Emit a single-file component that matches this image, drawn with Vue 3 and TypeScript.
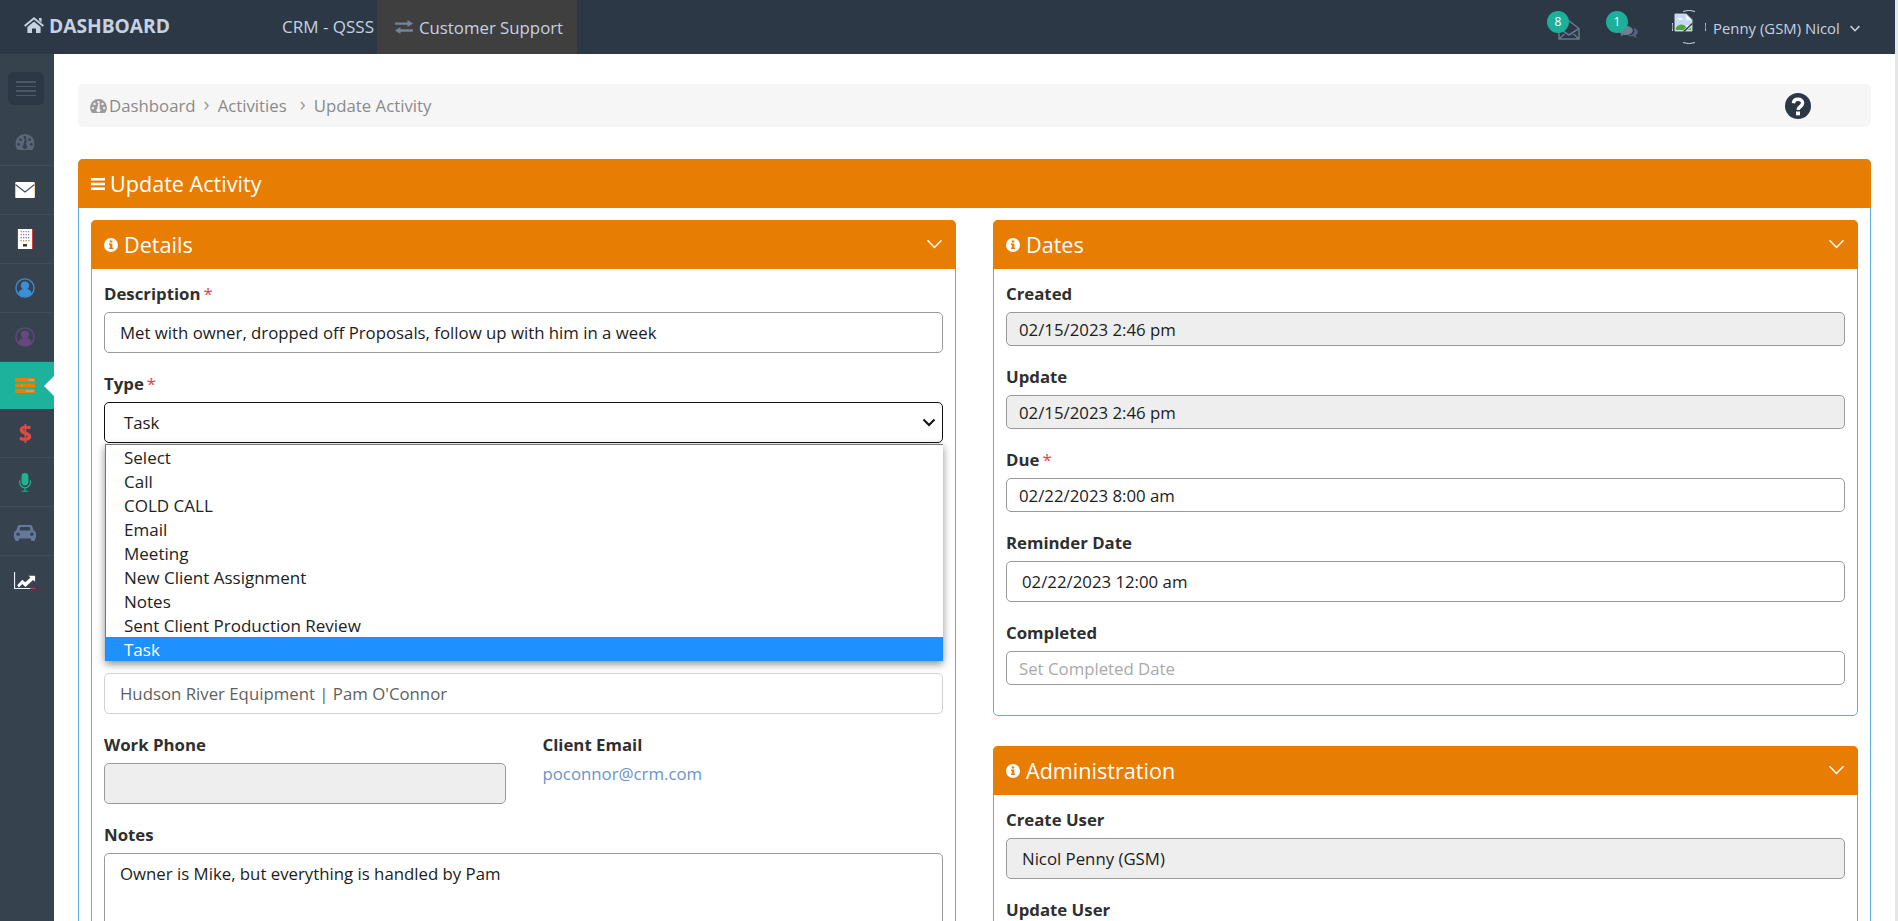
<script setup lang="ts">
interface NavItem {
  icon: string
  active?: boolean
  dollar?: boolean
}

const navItems: NavItem[] = [
  { icon: 'gauge' },
  { icon: 'mail' },
  { icon: 'building' },
  { icon: 'user-blue' },
  { icon: 'user-purple' },
  { icon: 'tasks', active: true },
  { icon: 'dollar', dollar: true },
  { icon: 'mic' },
  { icon: 'car' },
  { icon: 'chart' },
]

const typeOptions: string[] = [
  'Select',
  'Call',
  'COLD CALL',
  'Email',
  'Meeting',
  'New Client Assignment',
  'Notes',
  'Sent Client Production Review',
  'Task',
]
</script>

<template>
  <div class="shell">
    <svg class="defs" width="0" height="0" aria-hidden="true">
      <symbol id="i-gauge" viewBox="0 0 24 20">
        <path fill="currentColor" d="M12 0A12 12 0 0 0 0 12c0 2.900 1 5.600 2.600 7.600.2.300.5.400.9.400h17c.4 0 .7-.1.900-.4C23 17.600 24 14.900 24 12A12 12 0 0 0 12 0z" />
        <g fill="var(--hole)">
          <circle cx="4" cy="13" r="1.700" />
          <circle cx="6.300" cy="7" r="1.700" />
          <circle cx="12" cy="4.300" r="1.700" />
          <circle cx="17.700" cy="7" r="1.700" />
          <circle cx="20" cy="13" r="1.700" />
          <path d="M13.800 6 13.400 13.600a2.800 2.800 0 1 1-3.300.2L11.800 6z" />
        </g>
      </symbol>
      <symbol id="i-info" viewBox="0 0 16 16">
        <path fill-rule="evenodd" fill="currentColor" d="M8 0a8 8 0 1 1 0 16A8 8 0 0 1 8 0zM6.500 2.800v2.400h3V2.800zM5.700 6.400v1.500h1v3.300h-1v1.500h4.800v-1.500h-1V6.400z" />
      </symbol>
      <symbol id="i-chevron" viewBox="0 0 16 10">
        <path fill="none" stroke="currentColor" stroke-width="1.500" d="M1 1.200 8 8.500l7-7.300" />
      </symbol>
    </svg>

    <div class="page">
      <header class="topbar">
        <div class="brand">
          <svg class="home" viewBox="0 0 20 16">
            <path fill="currentColor" d="M10 0 20 8.300 18.700 9.800 10 2.600 1.300 9.800 0 8.300 10 0zM15 1h2.600v4.400L15 3.200zM3.400 10 10 4.500l6.600 5.500v6H12v-4.500H8V16H3.400z" />
          </svg>
          <span>DASHBOARD</span>
        </div>
        <span class="crm">CRM - QSSS</span>
        <div class="tab">
          <svg class="exchange" viewBox="0 0 18 14">
            <path fill="currentColor" d="M0 2.500h12.500V0L18 3.500 12.500 7V4.800H0zM18 9.200H5.500V7L0 10.500 5.500 14v-2.300H18z" />
          </svg>
          <span>Customer Support</span>
        </div>
        <div class="top-right">
          <div class="notice mail-notice">
            <svg class="env-open" viewBox="0 0 22 20">
              <path fill="none" stroke="currentColor" stroke-width="1.500" d="M1 8.500 11 1l10 7.500V19H1zM1 8.500 11 15l10-6.500M1 19l7-6.500M21 19l-7-6.500" />
            </svg>
            <span class="badge">8</span>
          </div>
          <div class="notice chat-notice">
            <svg class="comments" viewBox="0 0 22 16">
              <path fill="#717e92" d="M8 1c4.400 0 8 2.400 8 5.300s-3.600 5.300-8 5.300c-.9 0-1.800-.1-2.600-.3C4 12.400 2.600 13 1 13.200c1-.8 1.700-1.900 1.900-3C1 9.200 0 7.800 0 6.300 0 3.400 3.600 1 8 1z" />
              <path fill="#54647c" d="M17.200 3.500c2.700.7 4.600 2.500 4.600 4.500 0 1.500-1 2.800-2.600 3.700.2 1.100 1 2.400 1.600 3.300-1.600-.3-3-1.200-4-2.200-.7.1-1.400.2-2.200.2-1.700 0-3.300-.4-4.500-1 5 .4 9.800-2.700 6.800-8.500z" />
            </svg>
            <span class="badge">1</span>
          </div>
          <div class="avatar">
            <svg class="ring" viewBox="0 0 34 34">
              <g fill="none" stroke="#c8d0da" stroke-width="1">
                <path d="M11 1.500a16 16 0 0 1 12 0" />
                <path d="M11 32.500a16 16 0 0 0 12 0" />
                <path d="M.5 13a17 17 0 0 0 0 8" />
                <path d="M33.500 13a17 17 0 0 1 0 8" />
              </g>
            </svg>
            <svg class="broken" viewBox="0 0 20 20">
              <path fill="#f2f5f8" stroke="#a9bacb" stroke-width="1" d="M1 1h12l6 6v12H1z" />
              <path fill="#c3d9f3" d="M2 2h10.500v5.500H18v5L2 14z" />
              <path fill="#4fa53a" d="M2 18v-3c4-4 8-4 11 0l-3 3z" />
              <path fill="#5fb548" d="M14 18l4-3v3z" />
              <path fill="#2c3846" d="M9 19.500 19.500 10v1.800L11.500 19.500z" />
              <path fill="#fff" d="M3.500 6.500c1-1.500 2.500-1.800 3.500-1 1.300-.3 2.200.5 2.300 1.500z" />
            </svg>
          </div>
          <span class="username">Penny (GSM) Nicol</span>
          <svg class="user-caret" viewBox="0 0 16 10">
            <path fill="none" stroke="currentColor" stroke-width="2.400" d="M1 1.200 8 8.500l7-7.300" />
          </svg>
        </div>
      </header>

      <div class="below">
        <nav class="sidebar">
          <div class="toggle">
            <span></span><span></span><span></span><span></span>
          </div>
          <div
            v-for="item in navItems"
            :key="item.icon"
            class="nav-item"
            :class="{ active: item.active }"
          >
            <span v-if="item.dollar" class="dollar">$</span>
            <svg v-else-if="item.icon === 'gauge'" class="ic gauge" viewBox="0 0 24 20"><use href="#i-gauge" /></svg>
            <svg v-else-if="item.icon === 'mail'" class="ic mail" viewBox="0 0 22 16" preserveAspectRatio="none">
              <rect width="22" height="16" rx="1.500" fill="#fff" />
              <path d="M.5 2.500 11 10l10.500-7.500" fill="none" stroke="#3a4a5e" stroke-width="1.200" />
              <path d="M.3 1.500V15" stroke="#4d94d8" stroke-width=".6" />
              <path d="M21.700 1.500V15" stroke="#e8b25a" stroke-width=".6" />
            </svg>
            <svg v-else-if="item.icon === 'building'" class="ic building" viewBox="0 0 16 20">
              <rect width="16" height="20" fill="#fff" />
              <rect width="1" height="20" fill="#2f55c9" />
              <rect x="15" width="1" height="20" fill="#d93a3a" />
              <g fill="#8a80c0">
                <rect x="3.500" y="2" width="1.300" height="1.300" /><rect x="6" y="2" width="1.300" height="1.300" /><rect x="8.500" y="2" width="1.300" height="1.300" /><rect x="11" y="2" width="1.300" height="1.300" />
              </g>
              <g fill="#d0709a">
                <rect x="3.500" y="5" width="1.300" height="1.300" /><rect x="6" y="5" width="1.300" height="1.300" /><rect x="8.500" y="5" width="1.300" height="1.300" /><rect x="11" y="5" width="1.300" height="1.300" />
              </g>
              <g fill="#4f7fd0">
                <rect x="3.500" y="8" width="1.300" height="1.300" /><rect x="6" y="8" width="1.300" height="1.300" /><rect x="8.500" y="8" width="1.300" height="1.300" /><rect x="11" y="8" width="1.300" height="1.300" />
              </g>
              <g fill="#c08f4a">
                <rect x="3.500" y="11" width="1.300" height="1.300" /><rect x="6" y="11" width="1.300" height="1.300" /><rect x="8.500" y="11" width="1.300" height="1.300" /><rect x="11" y="11" width="1.300" height="1.300" />
              </g>
              <rect x="6" y="15" width="4" height="2.500" fill="#2c3846" />
            </svg>
            <svg v-else-if="item.icon === 'user-blue' || item.icon === 'user-purple'" class="ic user" :class="item.icon" viewBox="0 0 22 22">
              <circle cx="11" cy="11" r="10" fill="none" stroke="currentColor" stroke-width="1.500" />
              <circle cx="11" cy="8.300" r="4.500" fill="currentColor" />
              <path fill="currentColor" d="M3.800 17.200c.3-3.400 3-5 7.200-5s6.900 1.600 7.200 5C16.400 19.400 13.800 20.400 11 20.400s-5.400-1-7.200-3.200z" />
            </svg>
            <svg v-else-if="item.icon === 'tasks'" class="ic tasks" viewBox="0 0 22 18" preserveAspectRatio="none">
              <rect width="22" height="5" fill="#e87e04" />
              <rect y="6.500" width="22" height="5" fill="#e87e04" />
              <rect y="13" width="22" height="5" fill="#e87e04" />
              <rect x="15" y="1.200" width="6" height="2.400" fill="#8fb59c" />
              <rect x="7" y="7.800" width="1.500" height="2.400" fill="#8fb59c" />
              <rect x="12" y="14.300" width="9" height="2.400" fill="#8fb59c" />
            </svg>
            <svg v-else-if="item.icon === 'mic'" class="ic mic" viewBox="0 0 14 22">
              <rect x="3" y="0" width="8" height="14.500" rx="4" fill="#1cb58f" />
              <path d="M.8 8.500v2.500a6.200 6.200 0 0 0 12.400 0V8.500M7 17.500V21M3 21.200h8" fill="none" stroke="#1cb58f" stroke-width="1.400" />
            </svg>
            <svg v-else-if="item.icon === 'car'" class="ic car" viewBox="0 0 24 20" preserveAspectRatio="none">
              <path fill-rule="evenodd" fill="#64799a" d="M6.500 0h11c1.200 0 2.200.7 2.600 1.900L21.500 7c1.500.6 2.500 2 2.500 3.600V16c0 .6-.4 1-1 1v1.500c0 .8-.7 1.500-1.500 1.500H20c-.8 0-1.500-.7-1.500-1.500V17h-13v1.500c0 .8-.7 1.500-1.500 1.500H2.500C1.700 20 1 19.300 1 18.500V17c-.6 0-1-.4-1-1v-5.400C0 9 1 7.600 2.500 7l1.400-5.100C4.300.7 5.300 0 6.500 0zM7 2.500 5.800 6.800h12.400L17 2.500zM4.500 9.500a2 2 0 1 0 0 4 2 2 0 0 0 0-4zm15 0a2 2 0 1 0 0 4 2 2 0 0 0 0-4z" />
            </svg>
            <svg v-else-if="item.icon === 'chart'" class="ic chart" viewBox="0 0 24 20" preserveAspectRatio="none">
              <path d="M.6 0v19.300H18" fill="none" stroke="#eef2ff" stroke-width="1.200" />
              <path d="M18 19.300h5.500" stroke="#d93a3a" stroke-width="1.200" />
              <path fill="#fff" d="M3.500 15.500 9 9.200l3.300 3L18 6.500 15.800 4.500H23v7l-2.200-2.200-8.300 8.200-3.400-3.300-3.800 4z" />
            </svg>
            <span v-if="item.active" class="nav-arrow"></span>
          </div>
        </nav>

        <main class="main">
          <div class="crumbs">
            <svg class="crumb-gauge" viewBox="0 0 24 20"><use href="#i-gauge" /></svg>
            <span class="crumb-first">Dashboard</span>
            <span class="sep">›</span>
            <span>Activities</span>
            <span class="sep wide">›</span>
            <span>Update Activity</span>
            <svg class="help" viewBox="0 0 26 26">
              <circle cx="13" cy="13" r="13" fill="#2c3846" />
              <path fill="none" stroke="#fff" stroke-width="3.400" d="M8.400 10.200c.3-2.600 2.200-3.900 4.600-3.900 2.600 0 4.600 1.500 4.600 3.800 0 3.700-4.400 3.500-4.600 6.700" />
              <rect x="11" y="18.500" width="4" height="3.800" fill="#fff" />
            </svg>
          </div>

          <section class="panel">
            <h1 class="panel-head">
              <svg class="bars" viewBox="0 0 14 12">
                <path fill="#fff" d="M0 0h14v2.400H0zM0 4.800h14v2.400H0zM0 9.600h14V12H0z" />
              </svg>
              <span>Update Activity</span>
            </h1>
            <div class="panel-body">
              <div class="col">
                <section class="card">
                  <h2 class="card-head">
                    <svg class="info" viewBox="0 0 16 16"><use href="#i-info" /></svg>
                    <span>Details</span>
                    <svg class="card-caret" viewBox="0 0 16 10"><use href="#i-chevron" /></svg>
                  </h2>
                  <div class="card-body">
                    <div class="field">
                      <label>Description<em>*</em></label>
                      <div class="input">Met with owner, dropped off Proposals, follow up with him in a week</div>
                    </div>
                    <div class="field type-field">
                      <label>Type<em>*</em></label>
                      <div class="input select">
                        <span>Task</span>
                        <svg class="select-caret" viewBox="0 0 14 9">
                          <path fill="none" stroke="#111" stroke-width="2" d="M1.500 1.500 7 7l5.500-5.500" />
                        </svg>
                      </div>
                      <ul class="dropdown">
                        <li
                          v-for="option in typeOptions"
                          :key="option"
                          :class="{ selected: option === 'Task' }"
                        >{{ option }}</li>
                      </ul>
                    </div>
                    <div class="covered"></div>
                    <div class="field">
                      <div class="input soft">Hudson River Equipment | Pam O'Connor</div>
                    </div>
                    <div class="field-row">
                      <div class="field">
                        <label>Work Phone</label>
                        <div class="input disabled"></div>
                      </div>
                      <div class="field">
                        <label>Client Email</label>
                        <span class="email">poconnor@crm.com</span>
                      </div>
                    </div>
                    <div class="field">
                      <label>Notes</label>
                      <div class="input notes">Owner is Mike, but everything is handled by Pam</div>
                    </div>
                  </div>
                </section>
              </div>

              <div class="col">
                <section class="card">
                  <h2 class="card-head">
                    <svg class="info" viewBox="0 0 16 16"><use href="#i-info" /></svg>
                    <span>Dates</span>
                    <svg class="card-caret" viewBox="0 0 16 10"><use href="#i-chevron" /></svg>
                  </h2>
                  <div class="card-body dates">
                    <div class="field">
                      <label>Created</label>
                      <div class="input short disabled">02/15/2023 2:46 pm</div>
                    </div>
                    <div class="field">
                      <label>Update</label>
                      <div class="input short disabled">02/15/2023 2:46 pm</div>
                    </div>
                    <div class="field">
                      <label>Due<em>*</em></label>
                      <div class="input short">02/22/2023 8:00 am</div>
                    </div>
                    <div class="field">
                      <label>Reminder Date</label>
                      <div class="input">02/22/2023 12:00 am</div>
                    </div>
                    <div class="field">
                      <label>Completed</label>
                      <div class="input short placeholder">Set Completed Date</div>
                    </div>
                  </div>
                </section>
                <section class="card">
                  <h2 class="card-head">
                    <svg class="info" viewBox="0 0 16 16"><use href="#i-info" /></svg>
                    <span>Administration</span>
                    <svg class="card-caret" viewBox="0 0 16 10"><use href="#i-chevron" /></svg>
                  </h2>
                  <div class="card-body">
                    <div class="field">
                      <label>Create User</label>
                      <div class="input disabled">Nicol Penny (GSM)</div>
                    </div>
                    <div class="field">
                      <label>Update User</label>
                      <div class="input disabled"></div>
                    </div>
                  </div>
                </section>
              </div>
            </div>
          </section>
        </main>
      </div>
    </div>
    <div class="scroll-strip"></div>
  </div>
</template>

<style>
html,
body {
  margin: 0;
  height: 921px;
  overflow: hidden;
  background: #fff;
}
</style>

<style scoped>
.shell {
  display: flex;
  height: 921px;
  overflow: hidden;
  font-family: "Open Sans", "Liberation Sans", sans-serif;
  font-size: 16.800px;
  color: #2f2f2f;
}
.defs {
  position: absolute;
}
.page {
  flex: 1;
  min-width: 0;
  display: flex;
  flex-direction: column;
}
.scroll-strip {
  width: 3px;
  background: #e6e6e6;
}
.topbar {
  height: 54px;
  flex: none;
  display: flex;
  align-items: center;
  background: #2c3846;
  color: #c6d2e0;
}
.brand {
  display: flex;
  align-items: center;
  gap: 5px;
  margin-left: 24px;
  width: 258px;
  font-weight: 700;
  font-size: 19.200px;
  padding-bottom: 4px;
  box-sizing: border-box;
}
.home {
  width: 20px;
  height: 16px;
}
.crm {
  width: 95px;
  font-size: 17px;
  padding-bottom: 1px;
}
.tab {
  height: 54px;
  width: 200px;
  box-sizing: border-box;
  padding-left: 18px;
  display: flex;
  align-items: center;
  gap: 6px;
  background: #3f3f3f;
}
.exchange {
  width: 18px;
  height: 14px;
  color: #71849c;
}
.top-right {
  margin-left: auto;
  display: flex;
  align-items: center;
  height: 54px;
  margin-right: 35px;
}
.notice {
  position: relative;
  height: 54px;
}
.mail-notice {
  width: 59px;
}
.chat-notice {
  width: 66px;
}
.env-open {
  position: absolute;
  left: 11px;
  top: 20px;
  width: 22px;
  height: 20px;
  color: #67788f;
}
.comments {
  position: absolute;
  left: 13px;
  top: 25px;
  width: 19px;
  height: 14px;
}
.badge {
  position: absolute;
  left: 0;
  top: 11px;
  width: 22px;
  height: 22px;
  border-radius: 50%;
  background: #1cb09a;
  color: #fff;
  font-size: 12px;
  line-height: 22px;
  text-align: center;
}
.avatar {
  position: relative;
  width: 34px;
  height: 34px;
  margin-right: 7px;
}
.ring {
  position: absolute;
  inset: 0;
  width: 34px;
  height: 34px;
}
.broken {
  position: absolute;
  left: 2px;
  top: 3px;
  width: 19px;
  height: 19px;
}
.username {
  width: 137px;
  padding-top: 2px;
  white-space: nowrap;
  font-size: 14.900px;
}
.user-caret {
  width: 10px;
  height: 7px;
  margin-top: 2px;
}
.below {
  flex: 1;
  min-height: 0;
  display: flex;
}
.sidebar {
  width: 54px;
  flex: none;
  background: #37424f;
  padding-top: 18px;
  box-sizing: border-box;
  --hole: #37424f;
}
.toggle {
  width: 36px;
  height: 33px;
  margin: 0 auto 12px 8px;
  box-sizing: border-box;
  padding: 9px 8px;
  border-radius: 5px;
  background: #2c3846;
  display: flex;
  flex-direction: column;
  justify-content: space-between;
}
.toggle span {
  height: 1.500px;
  background: #4b5868;
}
.nav-item {
  position: relative;
  height: 49px;
  box-sizing: border-box;
  padding-right: 4px;
  border-bottom: 1px solid #414c5a;
  display: flex;
  align-items: center;
  justify-content: center;
}
.nav-item:last-child {
  border-bottom: 0;
}
.nav-item.active {
  height: 47px;
  background: #1cb29b;
  border-bottom: 0;
}
.nav-arrow {
  position: absolute;
  right: 0;
  top: 14px;
  width: 0;
  height: 0;
  border: 10px solid transparent;
  border-left: 0;
  border-right-color: #fff;
}
.ic {
  display: block;
}
.gauge {
  width: 20px;
  height: 16px;
  color: #5a6577;
  margin-top: 2px;
}
.mail {
  width: 20px;
  height: 16px;
}
.building {
  width: 16px;
  height: 20px;
}
.user {
  width: 20px;
  height: 20px;
}
.user-blue {
  color: #3b8fd9;
}
.user-purple {
  color: #65487d;
}
.tasks {
  width: 20px;
  height: 15px;
}
.dollar {
  color: #e8473f;
  font-weight: 700;
  font-size: 23px;
  line-height: 30px;
}
.mic {
  width: 12px;
  height: 19px;
}
.car {
  width: 22px;
  height: 16px;
  margin-top: 4px;
}
.chart {
  width: 22px;
  height: 17px;
}
.main {
  flex: 1;
  min-width: 0;
  padding: 30px 24px 0;
  box-sizing: border-box;
}
.crumbs {
  height: 43px;
  display: flex;
  align-items: center;
  padding-left: 12px;
  padding-right: 60px;
  border-radius: 5px;
  background: #f6f6f6;
  color: #8a8a8a;
  margin-bottom: 32px;
  --hole: #f6f6f6;
}
.crumb-gauge {
  width: 17px;
  height: 14px;
  color: #9b9b9b;
  margin-right: 2px;
}
.sep {
  margin: 0 8px;
  font-size: 20px;
  line-height: 1;
  padding-bottom: 4px;
  color: #9a9a9a;
}
.sep.wide {
  margin-left: 13px;
}
.help {
  margin-left: auto;
  width: 26px;
  height: 26px;
}
.panel {
  border: 1px solid #5dade2;
  border-radius: 5px 5px 0 0;
}
.panel-head {
  margin: -1px -1px 0;
  height: 49px;
  display: flex;
  align-items: center;
  gap: 5px;
  padding-left: 13px;
  box-sizing: border-box;
  background: #e87d03;
  border-radius: 5px 5px 0 0;
  color: #fff;
  font-size: 21.600px;
  font-weight: 400;
}
.bars {
  width: 14px;
  height: 12px;
}
.panel-body {
  display: grid;
  grid-template-columns: 865px 865px;
  column-gap: 37px;
  padding: 12px 12px 0;
}
.col {
  display: flex;
  flex-direction: column;
  gap: 30px;
}
.card {
  border: 1px solid #5dade2;
  border-radius: 5px;
}
.card-head {
  margin: -1px -1px 0;
  height: 49px;
  display: flex;
  align-items: center;
  gap: 6px;
  padding: 0 13px 1px;
  box-sizing: border-box;
  background: #e87d03;
  border-radius: 5px 5px 0 0;
  color: #fff;
  font-size: 21.600px;
  font-weight: 400;
}
.info {
  width: 14px;
  height: 14px;
  margin-top: 2px;
}
.card-caret {
  margin-left: auto;
  width: 17px;
  height: 10px;
}
.card-body {
  padding: 14px 12px 10px;
}
.field {
  position: relative;
  margin-bottom: 20px;
}
.field label {
  display: block;
  height: 22px;
  line-height: 22px;
  margin-bottom: 7px;
  font-weight: 700;
}
.field label em {
  margin-left: 3px;
  color: #e0434b;
  font-style: normal;
  font-weight: 400;
}
.input {
  box-sizing: border-box;
  height: 41px;
  display: flex;
  align-items: center;
  padding: 0 15px;
  border: 1px solid #9a9a9a;
  border-radius: 5px;
  background: #fff;
  color: #1c1c1c;
}
.input.short {
  height: 34px;
  padding: 0 12px;
}
.input.disabled {
  background: #eeeeee;
}
.input.placeholder {
  color: #a9a9a9;
}
.input.soft {
  border-color: #d2d2d2;
  color: #5f5f5f;
}
.input.select {
  border: 1.500px solid #111;
  padding-left: 19px;
  justify-content: space-between;
  padding-right: 6px;
}
.select-caret {
  width: 14px;
  height: 9px;
}
.input.notes {
  height: 120px;
  align-items: flex-start;
  padding-top: 8px;
}
.dropdown {
  position: absolute;
  z-index: 2;
  left: 1px;
  right: 0;
  top: 71px;
  margin: 0;
  padding: 0;
  list-style: none;
  background: #fff;
  border: 1px solid #767676;
  border-bottom: 0;
  border-right: 0;
  box-shadow: 0 3px 8px rgba(0, 0, 0, 0.45);
  color: #222;
  font-size: 17px;
}
.dropdown li {
  height: 24px;
  line-height: 25px;
  padding-left: 18px;
}
.dropdown li.selected {
  background: #1e90ff;
  color: #fff;
}
.covered {
  height: 210px;
}
.field-row {
  display: grid;
  grid-template-columns: 401.500px 401.500px;
  column-gap: 37px;
}
.email {
  color: #6b93c9;
  display: block;
  line-height: 22px;
  margin-top: 2px;
}
</style>
